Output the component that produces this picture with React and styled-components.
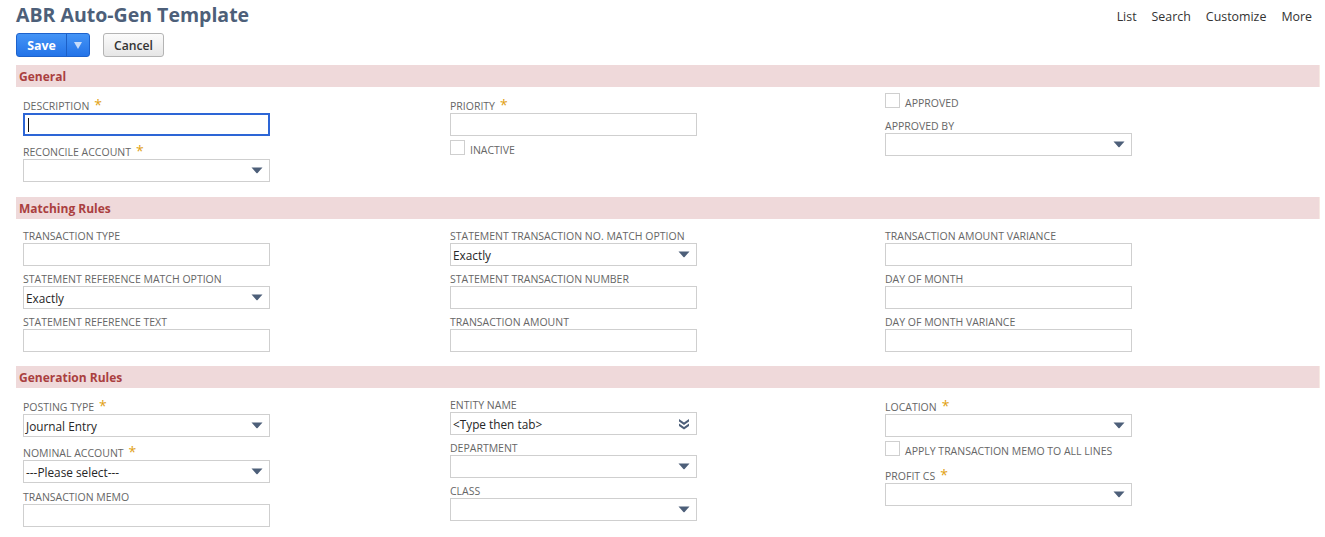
import React from 'react';
import styled, { createGlobalStyle } from 'styled-components';

const GlobalStyle = createGlobalStyle`
  html, body {
    margin: 0;
    padding: 0;
    background: #fff;
    font-family: 'Open Sans', 'Liberation Sans', Arial, sans-serif;
  }
`;

const Page = styled.div`
  width: 1325px;
  box-sizing: border-box;
  padding: 0 5px 0 16px;
`;

const TopBar = styled.div`
  display: flex;
  justify-content: space-between;
  align-items: center;
  height: 30px;
`;

const Title = styled.h1`
  margin: 0;
  font-size: 19.5px;
  font-weight: 700;
  color: #4d5f79;
  line-height: 30px;
`;

const Links = styled.nav`
  display: flex;
  gap: 15px;
  padding-top: 2px;
  padding-right: 8px;
  a {
    font-size: 12.4px;
    color: #333;
    text-decoration: none;
  }
`;

const ButtonRow = styled.div`
  display: flex;
  gap: 13px;
  margin: 3px 0 8px;
  height: 24px;
`;

const SaveGroup = styled.div`
  display: flex;
  height: 24px;
  border: 1px solid #1d62cc;
  border-radius: 3px;
  box-sizing: border-box;
  overflow: hidden;
  background: linear-gradient(#4494f6, #2373e8);
`;

const SavePart = styled.button`
  border: 0;
  background: transparent;
  color: #fff;
  font: 700 12.4px 'Open Sans', sans-serif;
  padding: 0;
  width: ${(p) => p.$w}px;
  border-left: ${(p) => (p.$divider ? '1px solid #1c5fc6' : '0')};
  display: flex;
  align-items: center;
  justify-content: center;
`;

const CancelButton = styled.button`
  height: 24px;
  width: 61px;
  border: 1px solid #b4b4b4;
  border-radius: 3px;
  background: linear-gradient(#fbfbfb, #e6e6e6);
  font: 600 12.2px 'Open Sans', sans-serif;
  color: #333;
  padding: 0;
`;

const SectionHeader = styled.div`
  height: 22px;
  background: #efd9da;
  color: #aa3f3f;
  font-size: 12px;
  font-weight: 700;
  line-height: 23px;
  padding-left: 3px;
  border-right: 1px solid #f6e9e3;
`;

const FieldGrid = styled.div`
  display: grid;
  grid-template-columns: 427px 435px 1fr;
  padding: 10px 0 8px 7px;
`;

const Column = styled.div`
  display: flex;
  flex-direction: column;
`;

const Field = styled.div`
  display: flex;
  flex-direction: column;
  margin-bottom: ${(p) => (p.$required ? '7px' : '6px')};
`;

const Label = styled.label`
  font-size: 10.5px;
  color: #666;
  text-transform: uppercase;
  line-height: ${(p) => (p.$required ? '16px' : '14px')};
  height: ${(p) => (p.$required ? '16px' : '14px')};
  white-space: nowrap;
`;

const Star = styled.span`
  color: #e1a114;
  font-size: 14px;
  margin-left: 5px;
`;

const Box = styled.div`
  width: 247px;
  height: 23px;
  box-sizing: border-box;
  border: ${(p) => (p.$focused ? '2px solid #2d66d6' : '1px solid #cfcfcf')};
  background: #fff;
  display: flex;
  align-items: center;
  padding: 0 ${(p) => (p.$focused ? '2px' : '2px')};
  font-size: 11.8px;
  color: #262626;
`;

const Value = styled.span`
  flex: 1;
  white-space: nowrap;
`;

const Caret = styled.span`
  display: block;
  width: 1px;
  height: 14px;
  background: #111;
  margin-left: 1px;
`;

const Arrow = styled.svg`
  width: 12px;
  height: 7px;
  margin-right: 4px;
  flex: none;
`;

const CheckRow = styled.div`
  display: flex;
  align-items: flex-start;
  gap: 5px;
  margin: ${(p) => (p.$first ? '-4px 0 9px' : '-3px 0 9px')};
  height: 17px;
`;

const CheckBox = styled.span`
  width: 15px;
  height: 15px;
  box-sizing: border-box;
  border: 1px solid #cfcfcf;
  background: #fff;
`;

const CheckLabel = styled.span`
  font-size: 10.5px;
  color: #666;
  line-height: 14px;
  margin-top: 3px;
  text-transform: uppercase;
`;

const DownArrow = () => (
  <Arrow viewBox="0 0 12 7">
    <path d="M0.5 0.5 L11.5 0.5 L6.6 6 Q6 6.6 5.4 6 Z" fill="#4d5f79" />
  </Arrow>
);

const DoubleChevron = () => (
  <Arrow viewBox="0 0 12 12" style={{ height: 12 }}>
    <path d="M1 1 L6 4.5 L11 1 L11 3.5 L6 7 L1 3.5 Z" fill="#4d5f79" />
    <path d="M1 5.5 L6 9 L11 5.5 L11 8 L6 11.5 L1 8 Z" fill="#4d5f79" />
  </Arrow>
);

const TextField = ({ label, required, focused }) => (
  <Field $required={required}>
    <Label $required={required}>
      {label}
      {required && <Star>*</Star>}
    </Label>
    <Box $focused={focused}>{focused && <Caret />}</Box>
  </Field>
);

const SelectField = ({ label, required, value, icon }) => (
  <Field $required={required}>
    <Label $required={required}>
      {label}
      {required && <Star>*</Star>}
    </Label>
    <Box>
      <Value>{value}</Value>
      {icon === 'double' ? <DoubleChevron /> : <DownArrow />}
    </Box>
  </Field>
);

const Check = ({ label, first }) => (
  <CheckRow $first={first}>
    <CheckBox />
    <CheckLabel>{label}</CheckLabel>
  </CheckRow>
);

export default function App() {
  return (
    <Page>
      <GlobalStyle />
      <TopBar>
        <Title>ABR Auto-Gen Template</Title>
        <Links>
          <a href="#">List</a>
          <a href="#">Search</a>
          <a href="#">Customize</a>
          <a href="#">More</a>
        </Links>
      </TopBar>
      <ButtonRow>
        <SaveGroup>
          <SavePart $w={49}>Save</SavePart>
          <SavePart $w={23} $divider>
            <svg width="8" height="7" viewBox="0 0 8 7">
              <path d="M0 0 L8 0 L4 7 Z" fill="#c6dcfa" />
            </svg>
          </SavePart>
        </SaveGroup>
        <CancelButton>Cancel</CancelButton>
      </ButtonRow>

      <SectionHeader>General</SectionHeader>
      <FieldGrid>
        <Column>
          <TextField label="Description" required focused />
          <SelectField label="Reconcile Account" required />
        </Column>
        <Column>
          <TextField label="Priority" required />
          <Check label="Inactive" />
        </Column>
        <Column>
          <Check label="Approved" first />
          <SelectField label="Approved By" />
        </Column>
      </FieldGrid>

      <SectionHeader>Matching Rules</SectionHeader>
      <FieldGrid>
        <Column>
          <TextField label="Transaction Type" />
          <SelectField label="Statement Reference Match Option" value="Exactly" />
          <TextField label="Statement Reference Text" />
        </Column>
        <Column>
          <SelectField label="Statement Transaction No. Match Option" value="Exactly" />
          <TextField label="Statement Transaction Number" />
          <TextField label="Transaction Amount" />
        </Column>
        <Column>
          <TextField label="Transaction Amount Variance" />
          <TextField label="Day of Month" />
          <TextField label="Day of Month Variance" />
        </Column>
      </FieldGrid>

      <SectionHeader>Generation Rules</SectionHeader>
      <FieldGrid>
        <Column>
          <SelectField label="Posting Type" required value="Journal Entry" />
          <SelectField label="Nominal Account" required value="---Please select---" />
          <TextField label="Transaction Memo" />
        </Column>
        <Column>
          <SelectField label="Entity Name" value="<Type then tab>" icon="double" />
          <SelectField label="Department" />
          <SelectField label="Class" />
        </Column>
        <Column>
          <SelectField label="Location" required />
          <Check label="Apply Transaction Memo to all lines" />
          <SelectField label="Profit CS" required />
        </Column>
      </FieldGrid>
    </Page>
  );
}
